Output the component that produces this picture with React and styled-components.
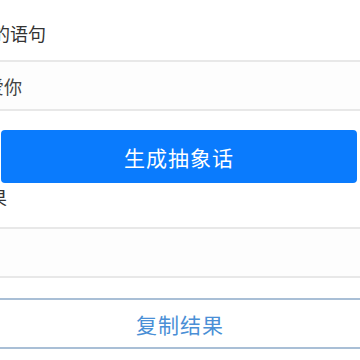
import React, { useState } from 'react'
import styled, { createGlobalStyle } from 'styled-components'

const GlobalStyle = createGlobalStyle`
  html, body {
    margin: 0;
    padding: 0;
    background: #ffffff;
    overflow: hidden;
  }
  body {
    font-family: "Noto Sans CJK SC", "Noto Sans", sans-serif;
  }
`

const Page = styled.div`
  width: 400px;
  margin: 0 -20px;
  display: flex;
  flex-direction: column;
`

const Label = styled.div`
  font-size: 18px;
  color: #333333;
  line-height: ${(p) => p.$lh}px;
  padding-top: ${(p) => p.$top || 0}px;
  margin-bottom: ${(p) => p.$bottom || 0}px;
  text-indent: ${(p) => p.$indent}px;
  white-space: nowrap;
`

const Field = styled.input`
  box-sizing: border-box;
  height: 51px;
  width: 100%;
  margin: 0;
  border: none;
  border-top: 2px solid #e8e8e8;
  border-bottom: 2px solid #e8e8e8;
  background: #fdfdfd;
  padding: 0 0 0 6px;
  font-family: inherit;
  font-size: 18px;
  color: #444444;
  outline: none;
`

const Output = styled.textarea`
  box-sizing: border-box;
  display: block;
  height: 51px;
  width: 100%;
  margin: 0;
  border: none;
  border-top: 2px solid #e8e8e8;
  border-bottom: 2px solid #e8e8e8;
  background: #fdfdfd;
  resize: none;
  padding: 10px;
  font-family: inherit;
  font-size: 18px;
  outline: none;
`

const PrimaryButton = styled.button`
  box-sizing: border-box;
  height: 53px;
  width: 356px;
  margin: 19px 0 0 21px;
  border: none;
  border-radius: 4px;
  background: #0a7bfd;
  color: #ffffff;
  font-family: inherit;
  font-size: 21px;
  letter-spacing: 1px;
  cursor: pointer;
`

const CopyButton = styled.button`
  box-sizing: border-box;
  height: 51px;
  width: 100%;
  margin-top: 20px;
  border: 2px solid #a9bfd6;
  border-radius: 4px;
  background: #ffffff;
  color: #4a8fd6;
  font-family: inherit;
  font-size: 21px;
  letter-spacing: 1px;
  cursor: pointer;
`

function App() {
  const [text, setText] = useState('爱你')
  const [result, setResult] = useState('')

  return (
    <>
      <GlobalStyle />
      <Page>
        <Label $lh={54} $top={6} $indent={12}>的语句</Label>
        <Field value={text} onChange={(e) => setText(e.target.value)} />
        <PrimaryButton onClick={() => setResult(text)}>生成抽象话</PrimaryButton>
        <Label $lh={28} $bottom={16} $indent={-9}>结果</Label>
        <Output value={result} readOnly />
        <CopyButton>复制结果</CopyButton>
      </Page>
    </>
  )
}

export default App
